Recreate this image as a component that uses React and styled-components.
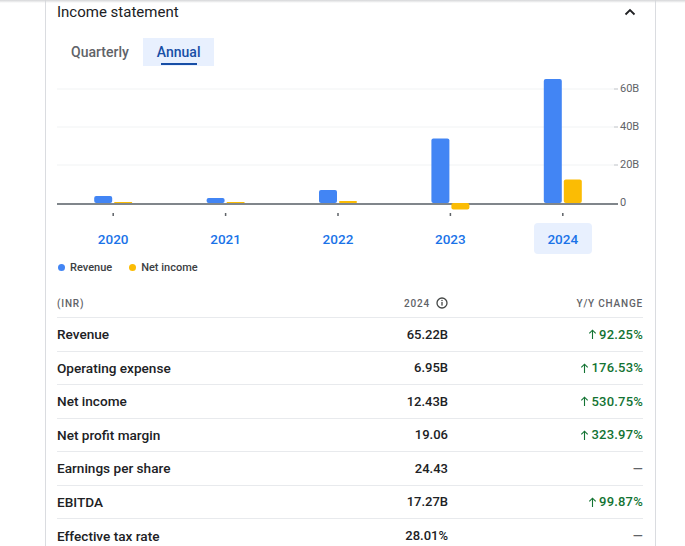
import React, { useState } from 'react';
import styled, { createGlobalStyle } from 'styled-components';

const GlobalStyle = createGlobalStyle`
  html, body {
    margin: 0;
    padding: 0;
    background: #ffffff;
    font-family: Roboto, "Noto Sans", Arial, sans-serif;
    -webkit-font-smoothing: antialiased;
  }
`;

const Page = styled.div`
  position: relative;
  padding-left: 45px;
  width: 685px;
  height: 546px;
  overflow: hidden;
  box-sizing: border-box;
`;

/* shadow of the sticky header above, lies over the card */
const TopShadow = styled.div`
  position: absolute;
  top: 0;
  left: 0;
  right: 0;
  height: 3px;
  background: linear-gradient(#d5d6d8, rgba(255, 255, 255, 0));
  z-index: 2;
`;

const Card = styled.section`
  width: 611px;
  box-sizing: border-box;
  border-left: 1px solid #dadce0;
  border-right: 1px solid #dadce0;
  padding: 0 12px 0 11px;
  min-height: 546px;
`;

const TitleRow = styled.div`
  display: flex;
  align-items: center;
  justify-content: space-between;
  height: 24px;
`;

const Title = styled.h2`
  margin: 0;
  font-size: 15px;
  font-weight: 400;
  line-height: 24px;
  color: #202124;
`;

const Collapse = styled.button`
  display: flex;
  align-items: center;
  justify-content: center;
  width: 24px;
  height: 24px;
  margin-right: 1px;
  padding: 0;
  border: none;
  background: none;
  cursor: pointer;
`;

const Tabs = styled.div`
  display: flex;
  margin-top: 14px;
  height: 28px;
`;

const Tab = styled.button`
  position: relative;
  height: 28px;
  padding: 0 14px;
  border: none;
  font-family: inherit;
  font-size: 14px;
  font-weight: 500;
  color: ${(p) => (p.$active ? '#174ea6' : '#5f6368')};
  background: ${(p) => (p.$active ? '#e8f0fe' : 'transparent')};
  cursor: pointer;

  &::after {
    content: '';
    display: ${(p) => (p.$active ? 'block' : 'none')};
    position: absolute;
    left: 18px;
    right: 17px;
    bottom: 1px;
    height: 2px;
    background: #174ea6;
  }
`;

const Chart = styled.svg`
  display: block;
  margin-top: 4px;
  overflow: visible;
`;

const YearRow = styled.div`
  display: grid;
  grid-template-columns: repeat(5, 112.4px);
  justify-items: center;
  margin-top: 3px;
  height: 31px;
`;

const Year = styled.button`
  width: 58px;
  height: 31px;
  border: none;
  border-radius: 4px;
  padding: 0;
  font-family: inherit;
  font-size: 13.5px;
  font-weight: 500;
  color: #1a73e8;
  background: ${(p) => (p.$active ? '#e8f0fe' : 'transparent')};
  cursor: pointer;
`;

const Legend = styled.div`
  display: flex;
  align-items: center;
  gap: 17px;
  margin-top: 6px;
  height: 14px;
  padding-left: 1px;
`;

const LegendItem = styled.span`
  display: flex;
  align-items: center;
  gap: 5px;
  font-size: 11px;
  font-weight: 500;
  color: #3c4043;

  &::before {
    content: '';
    width: 7px;
    height: 7px;
    border-radius: 50%;
    background: ${(p) => p.$color};
  }
`;

const Table = styled.div`
  margin-top: 15px;
`;

const Row = styled.div`
  display: grid;
  grid-template-columns: 1fr 150px 195px;
  align-items: center;
  height: ${(p) => (p.$head ? '29px' : '33.5px')};
  border-bottom: ${(p) => (p.$last ? 'none' : '1px solid #e8eaed')};
  box-sizing: border-box;
`;

const HeadCell = styled.div`
  display: flex;
  align-items: center;
  justify-content: ${(p) => (p.$right ? 'flex-end' : 'flex-start')};
  gap: 6px;
  font-size: 10px;
  font-weight: 500;
  letter-spacing: 0.8px;
  color: #5f6368;
`;

const Label = styled.div`
  font-size: 13.6px;
  font-weight: 500;
  color: #202124;
`;

const Value = styled.div`
  text-align: right;
  font-size: 13px;
  font-weight: 500;
  color: #202124;
`;

const Change = styled.div`
  display: flex;
  align-items: center;
  justify-content: flex-end;
  gap: 1px;
  font-size: 13px;
  font-weight: 500;
  letter-spacing: 0.2px;
  color: ${(p) => (p.$none ? '#5f6368' : '#137333')};
`;

const years = [
  { year: '2020', revenue: 3.7, net: 0.5 },
  { year: '2021', revenue: 2.6, net: 0.2 },
  { year: '2022', revenue: 6.8, net: 1.0 },
  { year: '2023', revenue: 33.9, net: -3.4 },
  { year: '2024', revenue: 65.22, net: 12.43 },
];

const rows = [
  { label: 'Revenue', value: '65.22B', change: '92.25%' },
  { label: 'Operating expense', value: '6.95B', change: '176.53%' },
  { label: 'Net income', value: '12.43B', change: '530.75%' },
  { label: 'Net profit margin', value: '19.06', change: '323.97%' },
  { label: 'Earnings per share', value: '24.43', change: null },
  { label: 'EBITDA', value: '17.27B', change: '99.87%' },
  { label: 'Effective tax rate', value: '28.01%', change: null },
];

const BASE = 133;
const SCALE = 1.9;

function Bar({ x, value, color }) {
  const h = Math.max(Math.abs(value) * SCALE, 1);
  const y = value >= 0 ? BASE - h : BASE;
  const r = Math.min(2, h / 2);
  return <rect x={x} y={y} width={18} height={h} rx={r} fill={color} />;
}

function IncomeChart() {
  const grid = [
    { y: 19, label: '60B' },
    { y: 57, label: '40B' },
    { y: 95, label: '20B' },
  ];
  return (
    <Chart width="586" height="150" viewBox="0 0 586 150">
      {grid.map((g) => (
        <g key={g.label}>
          <line x1="0" x2="557" y1={g.y} y2={g.y} stroke="#f1f3f4" strokeWidth="1" />
          <line x1="557" x2="561" y1={g.y} y2={g.y} stroke="#bdc1c6" strokeWidth="1" />
          <text x="563" y={g.y} dominantBaseline="middle" fontSize="11" fill="#5f6368" fontFamily="Roboto, sans-serif">
            {g.label}
          </text>
        </g>
      ))}
      <line x1="0" x2="561" y1={BASE + 1} y2={BASE + 1} stroke="#80868b" strokeWidth="2" />
      {years.map((d, i) => {
        const c = 56.2 + 112.4 * i;
        return (
          <g key={d.year}>
            <Bar x={c - 19} value={d.revenue} color="#4285f4" />
            <Bar x={c + 1} value={d.net} color="#fbbc04" />
            <rect x={c - 0.75} y="143" width="1.5" height="3" fill="#5f6368" />
          </g>
        );
      })}
      <text x="563" y={BASE} dominantBaseline="middle" fontSize="11" fill="#5f6368" fontFamily="Roboto, sans-serif">
        0
      </text>
    </Chart>
  );
}

function InfoIcon() {
  return (
    <svg width="12" height="12" viewBox="0 0 12 12">
      <circle cx="6" cy="6" r="5" fill="none" stroke="#444746" strokeWidth="1.3" />
      <rect x="5.35" y="5" width="1.3" height="3.6" fill="#444746" />
      <circle cx="6" cy="3.5" r="0.75" fill="#444746" />
    </svg>
  );
}

function UpArrow() {
  return (
    <svg width="11" height="12" viewBox="0 0 11 12">
      <path d="M5.5 11V2.2M2.3 5.4L5.5 2.2L8.7 5.4" fill="none" stroke="#137333" strokeWidth="1.1" />
    </svg>
  );
}

export default function App() {
  const [period, setPeriod] = useState('annual');
  const [year, setYear] = useState('2024');

  return (
    <>
      <GlobalStyle />
      <Page>
        <TopShadow />
        <Card>
          <TitleRow>
            <Title>Income statement</Title>
            <Collapse aria-label="Collapse">
              <svg width="12" height="8" viewBox="0 0 12 8">
                <path d="M1.5 6.5L6 2L10.5 6.5" fill="none" stroke="#202124" strokeWidth="1.8" />
              </svg>
            </Collapse>
          </TitleRow>

          <Tabs>
            <Tab $active={period === 'quarterly'} onClick={() => setPeriod('quarterly')}>
              Quarterly
            </Tab>
            <Tab $active={period === 'annual'} onClick={() => setPeriod('annual')}>
              Annual
            </Tab>
          </Tabs>

          <IncomeChart />

          <YearRow>
            {years.map((d) => (
              <Year key={d.year} $active={year === d.year} onClick={() => setYear(d.year)}>
                {d.year}
              </Year>
            ))}
          </YearRow>

          <Legend>
            <LegendItem $color="#4285f4">Revenue</LegendItem>
            <LegendItem $color="#fbbc04">Net income</LegendItem>
          </Legend>

          <Table>
            <Row $head>
              <HeadCell>(INR)</HeadCell>
              <HeadCell $right>
                {year}
                <InfoIcon />
              </HeadCell>
              <HeadCell $right>Y/Y CHANGE</HeadCell>
            </Row>
            {rows.map((r, i) => (
              <Row key={r.label} $last={i === rows.length - 1}>
                <Label>{r.label}</Label>
                <Value>{r.value}</Value>
                {r.change ? (
                  <Change>
                    <UpArrow />
                    {r.change}
                  </Change>
                ) : (
                  <Change $none>—</Change>
                )}
              </Row>
            ))}
          </Table>
        </Card>
      </Page>
    </>
  );
}
